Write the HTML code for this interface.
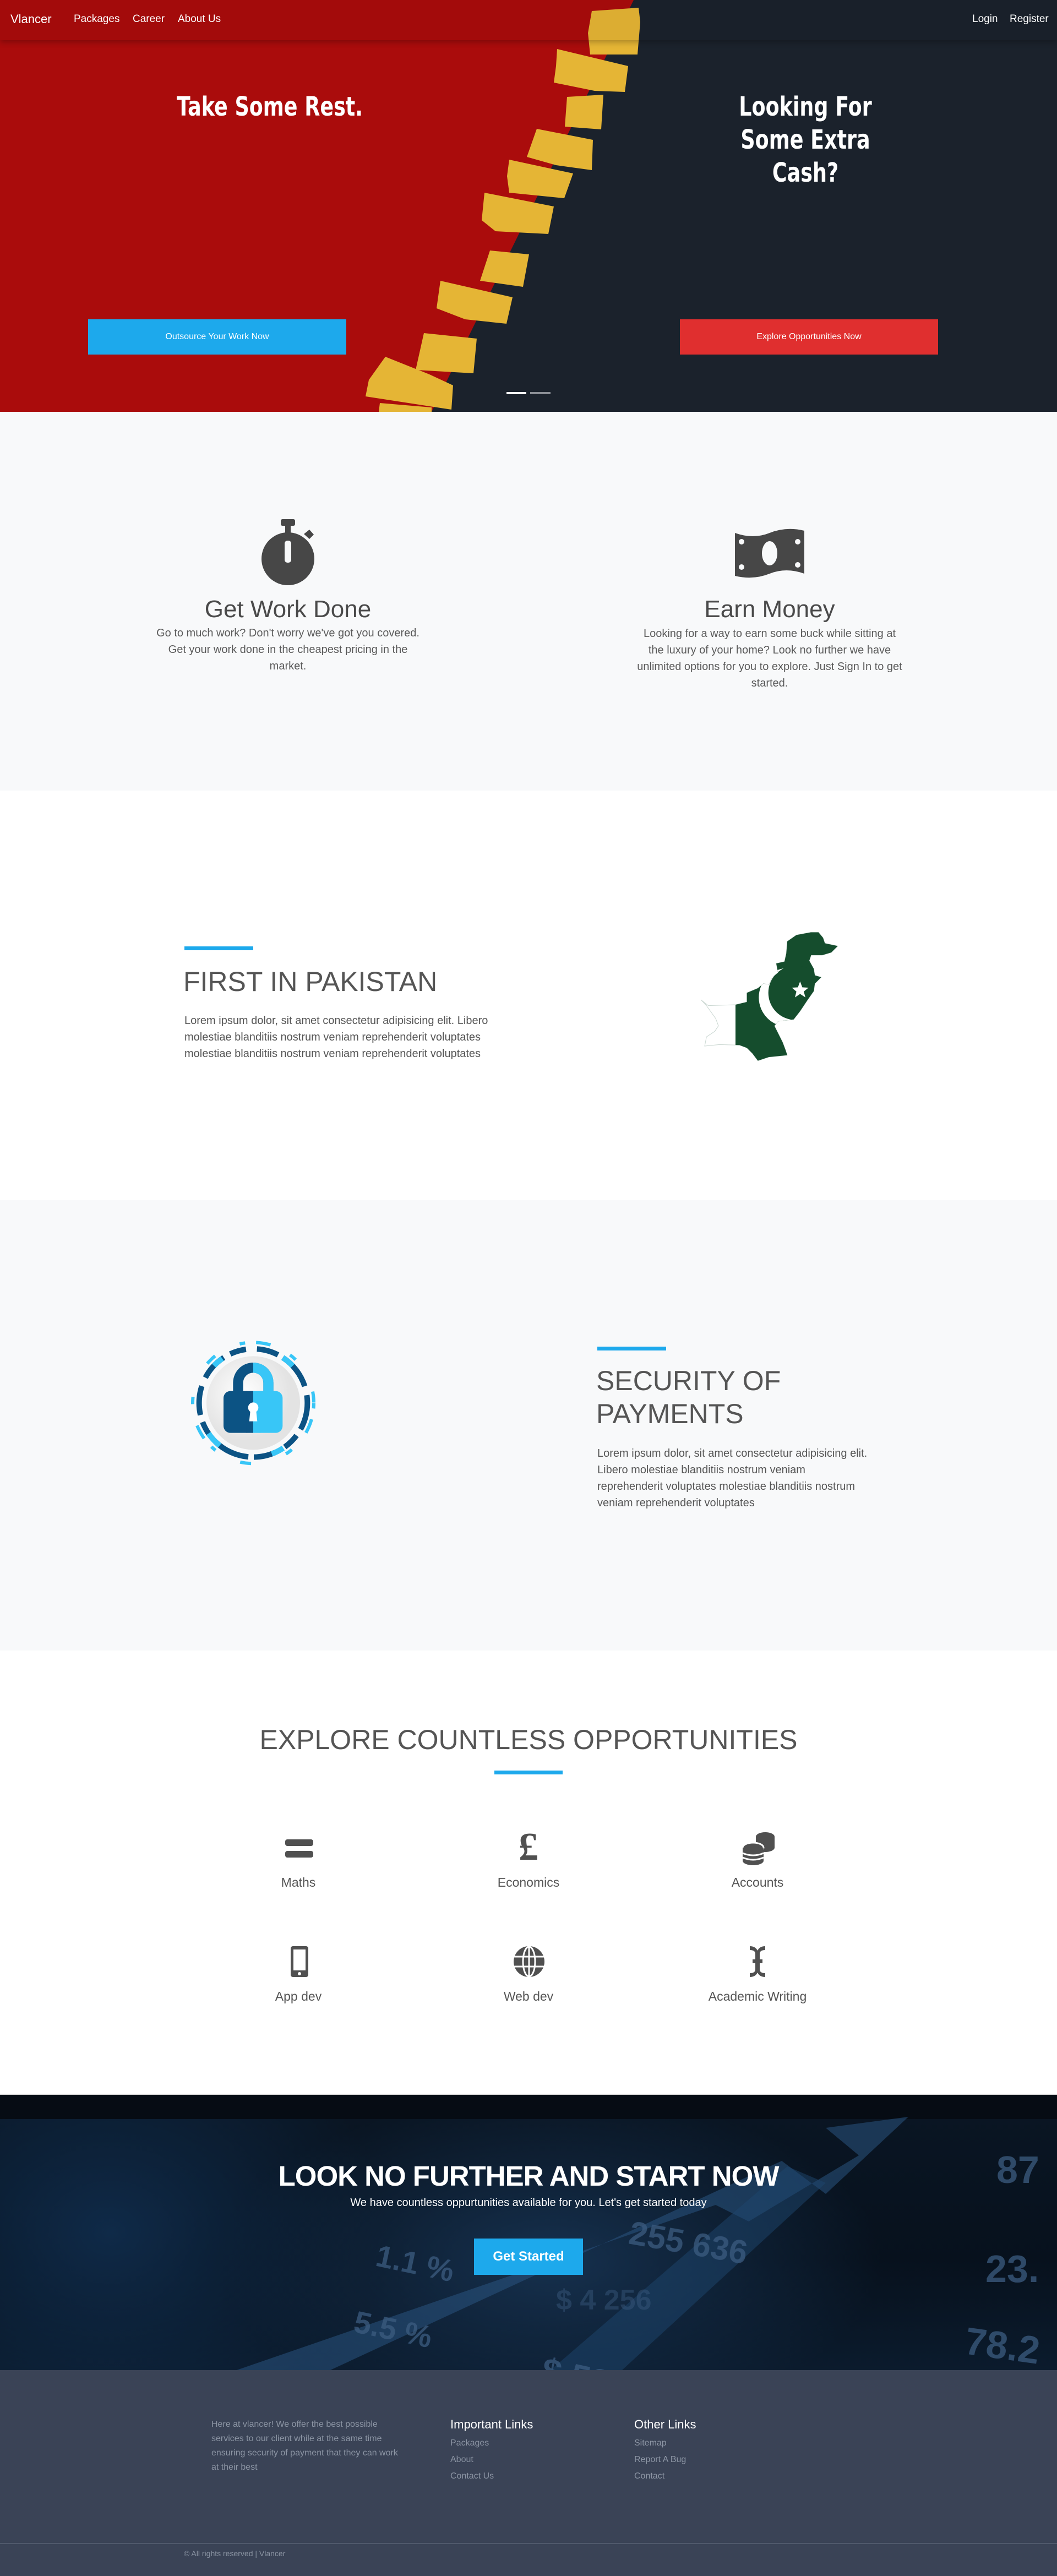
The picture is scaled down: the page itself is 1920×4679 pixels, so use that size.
<!DOCTYPE html>
<html><head><meta charset="utf-8">
<style>
*{margin:0;padding:0;box-sizing:border-box}
body{width:1920px;height:4679px;position:relative;font-family:"Liberation Sans",Arial,sans-serif;background:#fff;overflow:hidden}
.a{position:absolute}
.c{text-align:center}
.h{color:#4a4a4a;font-weight:normal}
.p{color:#5a5a5a;font-size:20px;line-height:30px}
.cm{font-family:'Comic Sans MS','DejaVu Sans',sans-serif;color:#fff;font-size:48px;line-height:60px;font-weight:bold;transform:scaleX(0.76)}
</style></head><body>

<!-- HERO -->
<div class="a" style="left:0;top:0;width:1920px;height:748px;background:#1b222c;overflow:hidden">
<svg class="a" style="left:0;top:0" width="1920" height="748" viewBox="0 0 1920 748">
<polygon points="0,0 1151,0 784,748 0,748" fill="#aa0c0c"/>
<g fill="#e5b535">
<polygon points="1075,20 1160,14 1163,40 1158,99 1072,99 1068,60"/>
<polygon points="1012,89 1141,120 1135,167 1080,165 1006,150 1010,120"/>
<polygon points="1030,176 1096,172 1092,235 1026,230"/>
<polygon points="975,234 1077,254 1075,309 1010,300 957,285"/>
<polygon points="925,290 1041,315 1025,360 925,350 921,320"/>
<polygon points="880,350 1006,375 996,425 900,420 875,400"/>
<polygon points="890,455 961,462 950,521 872,510"/>
<polygon points="800,510 931,540 920,588 845,580 793,560"/>
<polygon points="770,605 866,615 860,678 755,672"/>
<polygon points="700,648 780,680 823,700 820,744 664,720 670,690"/>
<polygon points="690,732 784,740 784,748 688,748"/>
</g>
</svg>
<div class="a" style="left:0;top:0;width:1920px;height:73px;background:rgba(0,0,0,0.04);box-shadow:0 4px 10px rgba(0,0,0,0.25)"></div>
<div class="a" style="left:19px;top:22px;color:#fff;font-size:22px">Vlancer</div>
<div class="a" style="left:134px;top:24px;color:#fff;font-size:19px">Packages</div>
<div class="a" style="left:241px;top:24px;color:#fff;font-size:19px">Career</div>
<div class="a" style="left:323px;top:24px;color:#fff;font-size:19px">About Us</div>
<div class="a" style="left:1766px;top:24px;color:#fff;font-size:19px">Login</div>
<div class="a" style="left:1834px;top:24px;color:#fff;font-size:19px">Register</div>
<div class="a c cm" style="left:190px;top:164px;width:600px">Take Some Rest.</div>
<div class="a c cm" style="left:1163px;top:164px;width:600px">Looking For<br>Some Extra<br>Cash?</div>
<div class="a c" style="left:160px;top:580px;width:469px;height:64px;line-height:64px;background:#1da9ec;color:#fff;font-size:16px">Outsource Your Work Now</div>
<div class="a c" style="left:1235px;top:580px;width:469px;height:64px;line-height:64px;background:#e02f2f;color:#fff;font-size:16px">Explore Opportunities Now</div>
<div class="a" style="left:920px;top:712px;width:36px;height:4px;background:#fff"></div>
<div class="a" style="left:963px;top:712px;width:37px;height:4px;background:#8b8f96"></div>
</div>

<!-- SECTION 2 -->
<div class="a" style="left:0;top:748px;width:1920px;height:688px;background:#f8f9fa"></div>
<svg class="a" style="left:472px;top:940px" width="102" height="124" viewBox="0 0 102 124">
<g fill="#474747"><rect x="38" y="3" width="26" height="12" rx="3"/><rect x="46" y="13" width="10" height="18"/>
<path d="M80 30 l10 -8 l8 9 l-8 8z"/>
<circle cx="51" cy="75" r="48"/></g>
<rect x="45" y="42" width="12" height="40" rx="5" fill="#f8f9fa"/>
</svg>
<div class="a c h" style="left:273px;top:1081px;width:500px;font-size:44px;line-height:52px">Get Work Done</div>
<div class="a c p" style="left:173px;top:1135px;width:700px">Go to much work? Don't worry we've got you covered.<br>Get your work done in the cheapest pricing in the<br>market.</div>
<svg class="a" style="left:1333px;top:958px" width="130" height="94" viewBox="0 0 130 94">
<path d="M2 10 Q35 22 65 10 T128 6 L128 84 Q95 72 65 84 T2 88Z" fill="#474747"/>
<ellipse cx="65" cy="47" rx="14" ry="22" fill="#f8f9fa"/>
<circle cx="14" cy="26" r="5" fill="#f8f9fa"/><circle cx="116" cy="26" r="5" fill="#f8f9fa"/>
<circle cx="14" cy="72" r="5" fill="#f8f9fa"/><circle cx="116" cy="68" r="5" fill="#f8f9fa"/>
</svg>
<div class="a c h" style="left:1148px;top:1081px;width:500px;font-size:44px;line-height:52px">Earn Money</div>
<div class="a c p" style="left:1048px;top:1136px;width:700px">Looking for a way to earn some buck while sitting at<br>the luxury of your home? Look no further we have<br>unlimited options for you to explore. Just Sign In to get<br>started.</div>

<!-- SECTION 3 -->
<div class="a" style="left:335px;top:1719px;width:125px;height:7px;background:#1da9ec"></div>
<div class="a h" style="left:333px;top:1755px;font-size:50px;line-height:56px;color:#555">FIRST IN PAKISTAN</div>
<div class="a p" style="left:335px;top:1839px;width:760px;color:#555">Lorem ipsum dolor, sit amet consectetur adipisicing elit. Libero<br>molestiae blanditiis nostrum veniam reprehenderit voluptates<br>molestiae blanditiis nostrum veniam reprehenderit voluptates</div>
<svg class="a" style="left:1240px;top:1660px" width="320" height="290" viewBox="0 0 960 870">
<defs><clipPath id="pk"><polygon points="100,468 140,500 288,495 350,480 350,430 410,405 440,380 470,385 490,345 520,320 510,270 555,260 565,215 570,150 620,115 700,100 740,100 765,130 775,160 845,175 810,210 760,225 700,225 690,255 715,300 720,335 755,345 720,380 715,420 680,470 640,530 605,575 560,580 520,585 500,610 520,650 545,700 560,740 570,770 470,780 410,800 380,760 350,730 310,715 200,712 120,720 130,670 175,640 195,610 180,570 130,500"/></clipPath></defs>
<polygon points="100,468 140,500 288,495 350,480 350,430 410,405 440,380 470,385 490,345 520,320 510,270 555,260 565,215 570,150 620,115 700,100 740,100 765,130 775,160 845,175 810,210 760,225 700,225 690,255 715,300 720,335 755,345 720,380 715,420 680,470 640,530 605,575 560,580 520,585 500,610 520,650 545,700 560,740 570,770 470,780 410,800 380,760 350,730 310,715 200,712 120,720 130,670 175,640 195,610 180,570 130,500" fill="#fff" stroke="#c9d6d0" stroke-width="3"/>
<g clip-path="url(#pk)">
<rect x="288" y="0" width="700" height="870" fill="#154d2d"/>
<circle cx="575" cy="455" r="160" fill="#fff"/>
<circle cx="615" cy="430" r="148" fill="#154d2d"/>
<polygon fill="#fff" points="640,368 652,400 686,402 660,423 669,455 640,436 612,455 620,423 595,402 628,400"/>
</g>
</svg>

<!-- SECTION 4 -->
<div class="a" style="left:0;top:2180px;width:1920px;height:818px;background:#f8f9fa"></div>
<svg class="a" style="left:330px;top:2420px" width="260" height="260" viewBox="0 0 780 780">
<defs><radialGradient id="g1" cx="0.4" cy="0.4"><stop offset="0" stop-color="#ffffff"/><stop offset="1" stop-color="#e3e3e3"/></radialGradient></defs>
<circle cx="390" cy="385" r="255" fill="url(#g1)"/>
<circle cx="390" cy="385" r="295" fill="none" stroke="#0c5384" stroke-width="30" stroke-dasharray="150 40 90 60 120 30 200 50 80 40 160 50" />
<circle cx="390" cy="385" r="295" fill="none" stroke="#38c6f7" stroke-width="30" stroke-dasharray="60 350 70 300 90 400" stroke-dashoffset="120"/>
<circle cx="390" cy="385" r="330" fill="none" stroke="#38c6f7" stroke-width="18" stroke-dasharray="30 60 80 120 40 200 60 150" />
<path d="M280 330 V275 A110 110 0 0 1 500 275 V330 H445 V275 A55 55 0 0 0 335 275 V330Z" fill="#0c5384"/>
<path d="M390 165 A110 110 0 0 1 500 275 V330 H445 V275 A55 55 0 0 0 390 220Z" fill="#38c6f7"/>
<rect x="228" y="320" width="162" height="228" rx="38" fill="#0c5384"/>
<rect x="352" y="320" width="38" height="228" fill="#0c5384"/>
<rect x="390" y="320" width="160" height="228" rx="38" fill="#38c6f7"/>
<rect x="390" y="320" width="40" height="228" fill="#38c6f7"/>
<circle cx="390" cy="410" r="28" fill="#fff"/><path d="M375 420 L368 485 H412 L405 420Z" fill="#fff"/>
</svg>
<div class="a" style="left:1085px;top:2446px;width:125px;height:7px;background:#1da9ec"></div>
<div class="a h" style="left:1083px;top:2478px;font-size:50px;line-height:60px;color:#555">SECURITY OF<br>PAYMENTS</div>
<div class="a p" style="left:1085px;top:2625px;width:760px;color:#555">Lorem ipsum dolor, sit amet consectetur adipisicing elit.<br>Libero molestiae blanditiis nostrum veniam<br>reprehenderit voluptates molestiae blanditiis nostrum<br>veniam reprehenderit voluptates</div>

<!-- SECTION 5 -->
<div class="a c h" style="left:0;top:3128px;width:1920px;font-size:50px;line-height:64px;color:#555">EXPLORE COUNTLESS OPPORTUNITIES</div>
<div class="a" style="left:898px;top:3216px;width:124px;height:7px;background:#1da9ec"></div>
<div class="a" style="left:518px;top:3341px;width:51px;height:12px;border-radius:4px;background:#505050"></div>
<div class="a" style="left:518px;top:3362px;width:51px;height:12px;border-radius:4px;background:#505050"></div>
<div class="a c" style="left:900px;top:3318px;width:120px;font-size:72px;line-height:72px;font-weight:bold;color:#505050;font-family:'Liberation Serif',serif">£</div>
<svg class="a" style="left:1348px;top:3328px" width="60" height="60" viewBox="0 0 60 60" fill="#505050">
<ellipse cx="42" cy="8" rx="17" ry="8"/><rect x="25" y="8" width="34" height="20"/><ellipse cx="42" cy="28" rx="17" ry="8"/>
<ellipse cx="20" cy="28" rx="19" ry="9" stroke="#fff" stroke-width="3"/><rect x="1" y="28" width="38" height="24"/><ellipse cx="20" cy="52" rx="19" ry="8"/>
<path d="M1 38 Q20 46 39 38 M1 46 Q20 54 39 46" stroke="#fff" stroke-width="3" fill="none"/>
</svg>
<div class="a c" style="left:442px;top:3405px;width:200px;font-size:23px;line-height:28px;color:#555">Maths</div>
<div class="a c" style="left:860px;top:3405px;width:200px;font-size:23px;line-height:28px;color:#555">Economics</div>
<div class="a c" style="left:1276px;top:3405px;width:200px;font-size:23px;line-height:28px;color:#555">Accounts</div>
<svg class="a" style="left:526px;top:3533px" width="36" height="60" viewBox="0 0 36 60">
<rect x="2" y="2" width="32" height="56" rx="4" fill="#505050"/><rect x="7" y="8" width="22" height="38" fill="#fff"/><circle cx="18" cy="52" r="3" fill="#fff"/>
</svg>
<svg class="a" style="left:932px;top:3534px" width="58" height="58" viewBox="0 0 58 58">
<circle cx="29" cy="29" r="28" fill="#505050"/>
<g stroke="#fff" stroke-width="3" fill="none"><ellipse cx="29" cy="29" rx="11" ry="27"/><line x1="29" y1="1" x2="29" y2="57"/><line x1="1" y1="20" x2="57" y2="20"/><line x1="1" y1="38" x2="57" y2="38"/></g>
</svg>
<svg class="a" style="left:1360px;top:3533px" width="32" height="60" viewBox="0 0 32 60" fill="#505050">
<path d="M2 2 Q12 2 16 10 Q20 2 30 2 V9 Q20 9 20 16 V26 H25 V33 H20 V44 Q20 51 30 51 V58 Q20 58 16 50 Q12 58 2 58 V51 Q12 51 12 44 V33 H7 V26 H12 V16 Q12 9 2 9Z"/>
</svg>
<div class="a c" style="left:442px;top:3612px;width:200px;font-size:23px;line-height:28px;color:#555">App dev</div>
<div class="a c" style="left:860px;top:3612px;width:200px;font-size:23px;line-height:28px;color:#555">Web dev</div>
<div class="a c" style="left:1256px;top:3612px;width:240px;font-size:23px;line-height:28px;color:#555">Academic Writing</div>

<!-- CTA -->
<div class="a" style="left:0;top:3803px;width:1920px;height:2px;background:#d8d8d8"></div>
<div class="a" style="left:0;top:3805px;width:1920px;height:500px;overflow:hidden;background:radial-gradient(ellipse 600px 300px at 1000px 300px,#16314f,transparent),radial-gradient(ellipse 500px 400px at 200px 250px,#0f2a48,transparent),linear-gradient(180deg,#0a1624,#07111d 60%,#0b1b2d)">
<div class="a" style="left:0;top:0;width:1920px;height:44px;background:#060c14"></div>
<svg class="a" style="left:0;top:0" width="1920" height="500" viewBox="0 0 1920 500">
<polygon points="430,500 600,500 1420,120 1500,180 1650,40 1500,60 1560,110 1360,230 1300,200" fill="#2a5480" opacity="0.55"/>
<polygon points="1000,500 1130,500 1500,160 1430,130" fill="#1e466e" opacity="0.5"/>
<g fill="#3d5c80" font-family="'Liberation Sans',sans-serif" font-weight="bold" opacity="0.75">
<text x="1140" y="270" font-size="60" transform="rotate(10 1140 270)">255 636</text>
<text x="680" y="310" font-size="56" transform="rotate(12 680 310)">1.1 %</text>
<text x="640" y="430" font-size="56" transform="rotate(12 640 430)">5.5 %</text>
<text x="980" y="520" font-size="64" transform="rotate(12 980 520)">$ 52 147</text>
<text x="1810" y="160" font-size="70">87</text>
<text x="1790" y="340" font-size="70">23.</text>
<text x="1750" y="470" font-size="70" transform="rotate(8 1750 470)">78.2</text>
<text x="1010" y="390" font-size="52" opacity="0.6">$ 4 256</text>
</g>
</svg>
</div>
<div class="a c" style="left:0;top:3924px;width:1920px;color:#fff;font-size:51px;line-height:58px;font-weight:bold;letter-spacing:-1px">LOOK NO FURTHER AND START NOW</div>
<div class="a c" style="left:0;top:3989px;width:1920px;color:#fff;font-size:20px;line-height:24px">We have countless oppurtunities available for you. Let's get started today</div>
<div class="a c" style="left:861px;top:4066px;width:198px;height:66px;line-height:66px;background:#1da9ec;color:#fff;font-size:24px;font-weight:bold">Get Started</div>

<!-- FOOTER -->
<div class="a" style="left:0;top:4305px;width:1920px;height:374px;background:#3a4356"></div>
<div class="a" style="left:384px;top:4391px;width:400px;color:#8c95a4;font-size:16px;line-height:26px">Here at vlancer! We offer the best possible<br>services to our client while at the same time<br>ensuring security of payment that they can work<br>at their best</div>
<div class="a" style="left:818px;top:4390px;color:#fff;font-size:22px;line-height:28px">Important Links</div>
<div class="a" style="left:818px;top:4423px;color:#8c95a4;font-size:16px;line-height:30px">Packages<br>About<br>Contact Us</div>
<div class="a" style="left:1152px;top:4390px;color:#fff;font-size:22px;line-height:28px">Other Links</div>
<div class="a" style="left:1152px;top:4423px;color:#8c95a4;font-size:16px;line-height:30px">Sitemap<br>Report A Bug<br>Contact</div>
<div class="a" style="left:0;top:4619px;width:1920px;height:2px;background:#4f596b"></div>
<div class="a" style="left:334px;top:4629px;color:#8c95a4;font-size:14px;line-height:18px">© All rights reserved | Vlancer</div>
</body></html>
